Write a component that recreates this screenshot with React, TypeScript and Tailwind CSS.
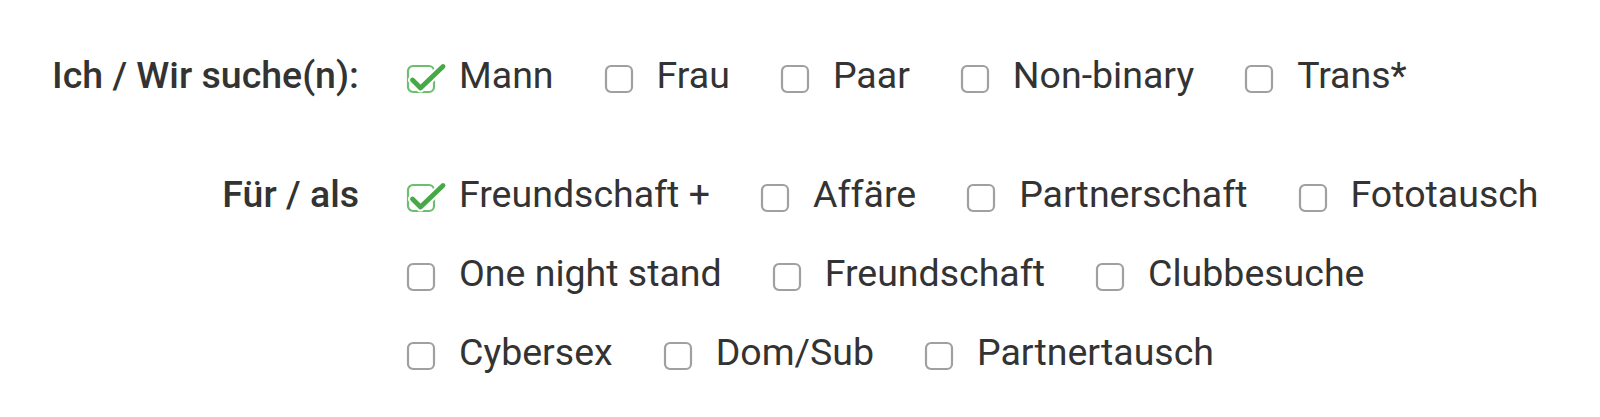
import { useState } from 'react'

type Group = { label: string; options: string[]; checked: string[] }

const groups: Group[] = [
  {
    label: 'Ich / Wir suche(n):',
    options: ['Mann', 'Frau', 'Paar', 'Non-binary', 'Trans*'],
    checked: ['Mann'],
  },
  {
    label: 'Für / als',
    options: [
      'Freundschaft +',
      'Affäre',
      'Partnerschaft',
      'Fototausch',
      'One night stand',
      'Freundschaft',
      'Clubbesuche',
      'Cybersex',
      'Dom/Sub',
      'Partnertausch',
    ],
    checked: ['Freundschaft +'],
  },
]

function CheckIcon({ checked }: { checked: boolean }) {
  return (
    <svg width="28" height="28" viewBox="0 0 28 28" className="shrink-0 overflow-visible mt-[7px]">
      <rect
        x="1"
        y="1"
        width="26"
        height="26"
        rx="5"
        fill="none"
        stroke={checked ? '#6cbf6c' : '#a0a0a0'}
        strokeWidth="2.2"
      />
      {checked && (
        <>
          <path d="M5.5 15 L13.5 23 L36 1.5" fill="none" stroke="#ffffff" strokeWidth="9" strokeLinecap="round" strokeLinejoin="round" />
          <path d="M5.5 15 L13.5 23 L36 1.5" fill="none" stroke="#46a846" strokeWidth="4.8" strokeLinecap="round" strokeLinejoin="round" />
        </>
      )}
    </svg>
  )
}

function Option({ label, initial }: { label: string; initial: boolean }) {
  const [on, setOn] = useState(initial)
  return (
    <label className="flex items-center gap-[24px] h-[79px] cursor-pointer select-none" onClick={() => setOn(!on)}>
      <CheckIcon checked={on} />
      <span className="text-[37.5px] leading-[79px] text-[#333333]">{label}</span>
    </label>
  )
}

export default function App() {
  return (
    <div className="min-h-screen bg-white pt-[36px] font-['Roboto',sans-serif]">
      <div className="flex flex-col gap-[40px]">
        {groups.map((g) => (
          <div key={g.label} className="flex">
            <div className="w-[359px] shrink-0 text-right text-[37.5px] leading-[79px] font-medium text-[#333333]">
              {g.label}
            </div>
            <div className="ml-[48px] w-[1165px] flex flex-wrap gap-x-[51px]">
              {g.options.map((o) => (
                <Option key={o} label={o} initial={g.checked.includes(o)} />
              ))}
            </div>
          </div>
        ))}
      </div>
    </div>
  )
}
